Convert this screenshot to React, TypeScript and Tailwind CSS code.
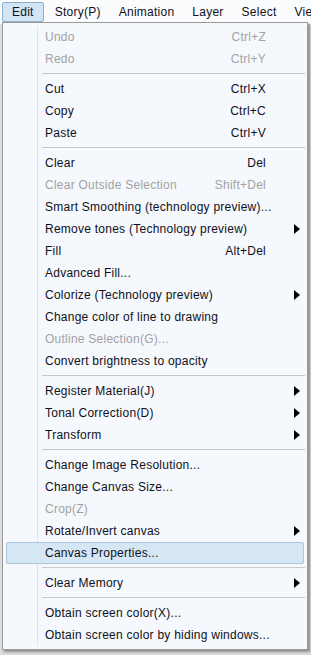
import React from "react"

type Item =
  | { sep: true }
  | { label: string; key?: string; sub?: boolean; disabled?: boolean; active?: boolean; sep?: false }

const items: Item[] = [
  { label: "Undo", key: "Ctrl+Z", disabled: true },
  { label: "Redo", key: "Ctrl+Y", disabled: true },
  { sep: true },
  { label: "Cut", key: "Ctrl+X" },
  { label: "Copy", key: "Ctrl+C" },
  { label: "Paste", key: "Ctrl+V" },
  { sep: true },
  { label: "Clear", key: "Del" },
  { label: "Clear Outside Selection", key: "Shift+Del", disabled: true },
  { label: "Smart Smoothing (technology preview)..." },
  { label: "Remove tones (Technology preview)", sub: true },
  { label: "Fill", key: "Alt+Del" },
  { label: "Advanced Fill..." },
  { label: "Colorize (Technology preview)", sub: true },
  { label: "Change color of line to drawing" },
  { label: "Outline Selection(G)...", disabled: true },
  { label: "Convert brightness to opacity" },
  { sep: true },
  { label: "Register Material(J)", sub: true },
  { label: "Tonal Correction(D)", sub: true },
  { label: "Transform", sub: true },
  { sep: true },
  { label: "Change Image Resolution..." },
  { label: "Change Canvas Size..." },
  { label: "Crop(Z)", disabled: true },
  { label: "Rotate/Invert canvas", sub: true },
  { label: "Canvas Properties...", active: true },
  { sep: true },
  { label: "Clear Memory", sub: true },
  { sep: true },
  { label: "Obtain screen color(X)..." },
  { label: "Obtain screen color by hiding windows..." },
]

const menubar = ["Edit", "Story(P)", "Animation", "Layer", "Select", "View"]

function Arrow() {
  return (
    <svg width="6" height="10" viewBox="0 0 6 10">
      <path d="M0 0 L6 5 L0 10 Z" fill="#000" />
    </svg>
  )
}

export default function App() {
  return (
    <div
      className="relative h-[655px] w-[311px] overflow-hidden bg-[#dcdcdc] text-[12px] tracking-[0.25px] text-[#10101a]"
      style={{ fontFamily: '"Liberation Sans", Arial, sans-serif' }}
    >
      {/* menubar */}
      <div className="flex h-[24px] items-center overflow-hidden bg-[#fbfcfd] pl-[2px]">
        {menubar.map((m, i) => (
          <div
            key={m}
            className={
              i === 0
                ? "mr-[2px] flex h-[20px] shrink-0 items-center rounded-[2px] border border-[#8fb0cc] bg-[#d3e5f4] px-[9px]"
                : "flex h-[20px] shrink-0 items-center px-[9px]"
            }
          >
            {m}
          </div>
        ))}
      </div>

      {/* dropdown */}
      <div className="absolute left-[2px] top-[22px] w-[306px] border border-[#9a9a9a] bg-[#f5f8fc] py-[3px] shadow-[2px_2px_2px_rgba(0,0,0,0.35)]">
        <div className="absolute bottom-[3px] left-[34px] top-[3px] w-[2px] border-l border-[#e0e2e4]" />
        {items.map((it, i) =>
          it.sep ? (
            <div key={i} className="relative flex h-[8px] items-center pl-[39px] pr-[2px]">
              <div className="h-[2px] w-full border-t border-[#c6c8ca]" />
            </div>
          ) : (
            <div
              key={i}
              className={
                "relative mx-[3px] flex h-[22px] items-center pl-[38px] " +
                (it.active ? "rounded-[2px] border border-[#a9c6de] bg-[#d5e6f4]" : "border border-transparent") +
                (it.disabled ? " text-[#a3a3a3]" : "")
              }
            >
              <span className="flex-1 whitespace-nowrap">{it.label}</span>
              {it.key && <span className="whitespace-nowrap">{it.key}</span>}
              <span className="flex w-[37px] justify-end pr-[3px]">{it.sub && <Arrow />}</span>
            </div>
          )
        )}
      </div>
    </div>
  )
}
